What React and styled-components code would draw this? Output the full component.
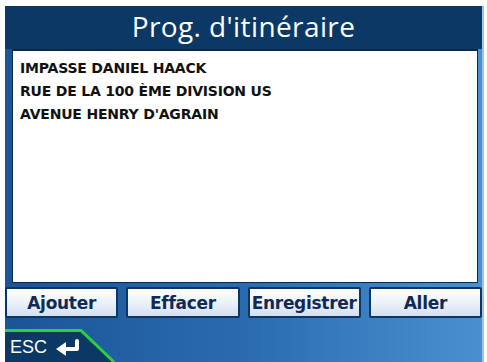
import React from "react";
import styled, { createGlobalStyle } from "styled-components";

const Global = createGlobalStyle`
  html, body { margin: 0; padding: 0; background: #ffffff; }
  #root { width: 487px; height: 362px; overflow: hidden; }
`;

const Frame = styled.div`
  margin: 6px 3px 0 5px;
  width: 479px;
  height: 356px;
  display: flex;
  flex-direction: column;
  background: linear-gradient(to right, #1a5596 0%, #2a6bb0 50%, #4a90d0 100%);
  border-right: 2px solid #9cc4ea;
  box-sizing: border-box;
`;

const Header = styled.div`
  height: 43px;
  background: #0b3864;
  color: #ffffff;
  font-family: "Open Sans", "DejaVu Sans", sans-serif;
  font-size: 28px;
  display: flex;
  align-items: center;
  justify-content: center;
  letter-spacing: 0.4px;
  padding-bottom: 2px;
  box-sizing: border-box;
`;

const ListBox = styled.div`
  margin: 0 4px 0 7px;
  height: 235px;
  background: #ffffff;
  border: 1px solid #0a2a4c;
  border-top-width: 2px;
  box-sizing: border-box;
  padding: 6px 7px;
  display: flex;
  flex-direction: column;
`;

const Row = styled.div`
  font-family: "DejaVu Sans", sans-serif;
  font-weight: bold;
  font-size: 14px;
  line-height: 23px;
  color: #111111;
  letter-spacing: -0.2px;
`;

const ButtonRow = styled.div`
  margin: 4px 0 0 0;
  display: grid;
  grid-template-columns: repeat(4, 1fr);
  gap: 8px;
  height: 31px;
`;

const Button = styled.div`
  box-sizing: border-box;
  border: 2px solid #0c3666;
  border-radius: 2px;
  background: linear-gradient(to bottom, #ffffff 0%, #eef3fa 45%, #d3e0f0 100%);
  color: #102a55;
  font-family: "DejaVu Sans", sans-serif;
  font-weight: bold;
  font-size: 17px;
  display: flex;
  align-items: center;
  justify-content: center;
  letter-spacing: -0.3px;
  white-space: nowrap;
`;

const Footer = styled.div`
  flex: 1;
  display: flex;
  align-items: flex-end;
  padding-top: 11px;
`;

const Tab = styled.div`
  position: relative;
  width: 114px;
  height: 33px;
  display: flex;
  align-items: center;
  gap: 8px;
  padding: 4px 0 0 5px;
  box-sizing: border-box;
  color: #ffffff;
  font-family: "Liberation Sans", Arial, sans-serif;
  font-size: 18px;
`;

const TabShape = styled.svg`
  position: absolute;
  left: 0;
  top: 0;
  width: 114px;
  height: 33px;
  z-index: 0;
`;

const TabContent = styled.span`
  position: relative;
  z-index: 1;
  display: flex;
  align-items: center;
`;

export default function App() {
  const rows = [
    "IMPASSE DANIEL HAACK",
    "RUE DE LA 100 ÈME DIVISION US",
    "AVENUE HENRY D'AGRAIN",
  ];
  const buttons = ["Ajouter", "Effacer", "Enregistrer", "Aller"];
  return (
    <>
      <Global />
      <Frame>
        <Header>Prog. d'itinéraire</Header>
        <ListBox>
          {rows.map((r) => (
            <Row key={r}>{r}</Row>
          ))}
        </ListBox>
        <ButtonRow>
          {buttons.map((b) => (
            <Button key={b}>{b}</Button>
          ))}
        </ButtonRow>
        <Footer>
          <Tab>
            <TabShape viewBox="0 0 114 33">
              <polygon points="0,1.5 76,1.5 109,33 0,33" fill="#0b3864" />
              <polyline
                points="0,1.5 76,1.5 109,33"
                fill="none"
                stroke="#2bd13c"
                strokeWidth="3"
              />
            </TabShape>
            <TabContent>ESC</TabContent>
            <TabContent>
              <svg width="26" height="18" viewBox="0 0 26 18">
                <path
                  d="M22 2 V10 H9"
                  fill="none"
                  stroke="#ffffff"
                  strokeWidth="4"
                  strokeLinejoin="round"
                  strokeLinecap="round"
                />
                <polygon points="1,10 11,3 11,17" fill="#ffffff" />
              </svg>
            </TabContent>
          </Tab>
        </Footer>
      </Frame>
    </>
  );
}
